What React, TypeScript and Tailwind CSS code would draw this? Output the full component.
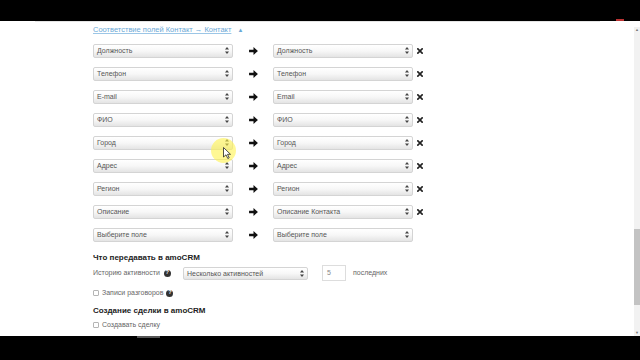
import React from "react";

const rows: [string, string, boolean][] = [
  ["Должность", "Должность", true],
  ["Телефон", "Телефон", true],
  ["E-mail", "Email", true],
  ["ФИО", "ФИО", true],
  ["Город", "Город", true],
  ["Адрес", "Адрес", true],
  ["Регион", "Регион", true],
  ["Описание", "Описание Контакта", true],
  ["Выберите поле", "Выберите поле", false],
];

function Chevrons() {
  return (
    <svg width="4" height="7" viewBox="0 0 4 7" className="shrink-0">
      <path d="M2 0 L4 2.6 H0 Z" fill="#444" />
      <path d="M2 7 L4 4.4 H0 Z" fill="#444" />
    </svg>
  );
}

function Select({ label, w = "w-[140px]", h = "h-[14px]" }: { label: string; w?: string; h?: string }) {
  return (
    <div
      className={`${w} ${h} flex items-center justify-between pl-[3px] pr-[3px] rounded-[2px] border border-[#d4d4d4] bg-gradient-to-b from-white via-[#f7f7f7] to-[#e4e4e4] text-[7px] text-[#555] leading-none`}
    >
      <span>{label}</span>
      <Chevrons />
    </div>
  );
}

function Arrow() {
  return (
    <svg width="9" height="8" viewBox="0 0 10 9">
      <path d="M0 3 H5 V0 L10 4.5 L5 9 V6 H0 Z" fill="#111" />
    </svg>
  );
}

function Cross() {
  return (
    <svg width="6" height="6" viewBox="0 0 7 7">
      <path d="M1 1 L6 6 M6 1 L1 6" stroke="#222" strokeWidth="1.9" strokeLinecap="square" />
    </svg>
  );
}

function Help() {
  return (
    <span className="inline-flex items-center justify-center w-[7px] h-[7px] rounded-full bg-[#333] text-white text-[5.5px] font-bold leading-none">
      ?
    </span>
  );
}

function Check({ label, help }: { label: string; help?: boolean }) {
  return (
    <div className="h-[12px] flex items-center gap-[2px] text-[7px] text-[#666]">
      <span className="w-[6px] h-[6px] rounded-[1px] border border-[#b5b5b5] bg-white mr-[1px]" />
      <span>{label}</span>
      {help && <span className="ml-[1px] flex"><Help /></span>}
    </div>
  );
}

export default function App() {
  return (
    <div className="w-[640px] h-[360px] bg-black flex flex-col overflow-hidden" style={{ fontFamily: '"Liberation Sans", Arial, sans-serif' }}>
      <div className="h-[21px] shrink-0 relative">
        <div className="absolute bottom-0 right-[16px] w-[8px] h-[2px] bg-[#b33]" />
      </div>
      <div className="h-[315px] shrink-0 bg-white relative">
        <div className="h-px bg-[#e4e4e4] mx-[35px] mr-[40px]" />
        <div className="pl-[93px]">
          <div className="mt-[3px] h-[10px] flex items-center gap-[6px]">
            <span className="text-[7.5px] text-[#6aa8d6] underline decoration-[#9cc6e6]">Соответствие полей Контакт → Контакт</span>
            <span className="text-[6px] text-[#6aa8d6]">▲</span>
          </div>
          <div className="mt-[4px]">
            {rows.map(([l, r, x], i) => (
              <div key={i} className="h-[23px] flex items-center">
                <Select label={l} />
                <div className="w-[40px] flex justify-center">
                  <Arrow />
                </div>
                <Select label={r} />
                {x && (
                  <div className="ml-[4px] flex">
                    <Cross />
                  </div>
                )}
              </div>
            ))}
          </div>
          <div className="mt-[7px] h-[10px] flex items-center text-[8px] font-bold text-[#222]">Что передавать в amoCRM</div>
          <div className="mt-[2px] h-[16px] flex items-center text-[7px] text-[#666]">
            <div className="w-[90px] flex items-center gap-[4px]">
              <span>Историю активности</span>
              <Help />
            </div>
            <Select label="Несколько активностей" w="w-[125px]" h="h-[13px]" />
            <div className="ml-[14px] w-[24px] h-[16px] border border-[#ddd] flex items-center pl-[4px] text-[#888]">5</div>
            <span className="ml-[7px]">последних</span>
          </div>
          <div className="mt-[6px]">
            <Check label="Записи разговоров" help />
          </div>
          <div className="mt-[7px] h-[10px] flex items-center text-[8px] font-bold text-[#222]">Создание сделки в amoCRM</div>
          <div className="mt-[3px]">
            <Check label="Создавать сделку" />
          </div>
        </div>

        {/* cursor highlight */}
        <div className="absolute left-[211px] top-[117px] w-[25px] h-[25px] rounded-full bg-[#fff34d]/60" />
        <svg className="absolute left-[223px] top-[126px]" width="8" height="12" viewBox="0 0 8 12">
          <path d="M0.5 0.5 V10 L3 7.8 L4.8 11.5 L6.2 10.8 L4.5 7.3 H7.5 Z" fill="white" stroke="#222" strokeWidth="0.8" />
        </svg>

        {/* scrollbar */}
        <div className="absolute right-0 top-[6px] bottom-0 w-[6px] bg-[#f2f2f2] flex flex-col items-center">
          <span className="text-[4px] text-[#777] leading-none mt-[1px]">▲</span>
          <div className="flex-1" />
          <span className="text-[4px] text-[#777] leading-none mb-[1px]">▼</span>
        </div>
        <div className="absolute right-0 top-[208px] w-[6px] h-[76px] bg-[#c3c3c3]" />
      </div>
      <div className="flex-1 relative">
        <div className="absolute left-[137px] top-0 w-[23px] h-[2px] bg-[#555]" />
      </div>
    </div>
  );
}
